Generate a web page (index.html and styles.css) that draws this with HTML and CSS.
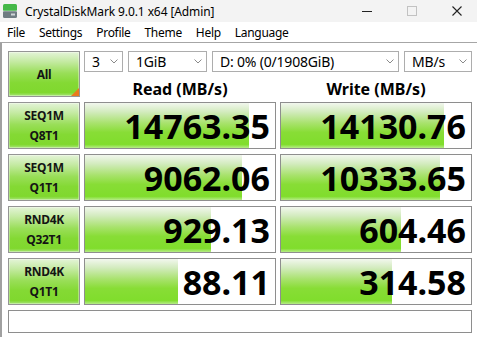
FILE: index.html
```html
<!DOCTYPE html>
<html>
<head>
<meta charset="utf-8">
<link rel="stylesheet" href="styles.css">
</head>
<body>
<div class="window">
  <div class="titlebar">
    <svg class="app-icon" width="14" height="14" viewBox="0 0 14 14">
      <rect x="0" y="0" width="14" height="6.5" rx="1.5" fill="#45b848"/>
      <rect x="0" y="4" width="14" height="2.5" fill="#45b848"/>
      <rect x="0" y="7.5" width="14" height="6.5" rx="1.5" fill="#6f7c82"/>
      <rect x="0" y="7.5" width="14" height="2.5" fill="#6f7c82"/>
      <rect x="8" y="9.5" width="4" height="2" fill="#cfd6d8"/>
    </svg>
    <span class="title">CrystalDiskMark 9.0.1 x64 [Admin]</span>
    <div class="controls">
      <div class="ctl"><svg width="10" height="10" viewBox="0 0 10 10"><line x1="0" y1="5.5" x2="10" y2="5.5" stroke="#222" stroke-width="1"/></svg></div>
      <div class="ctl"><svg width="10" height="10" viewBox="0 0 10 10"><rect x="0.5" y="0.5" width="9" height="9" fill="none" stroke="#c2c2c2" stroke-width="1"/></svg></div>
      <div class="ctl"><svg width="10" height="10" viewBox="0 0 10 10"><path d="M0.5 0.5 L9.5 9.5 M9.5 0.5 L0.5 9.5" stroke="#222" stroke-width="1.1" fill="none"/></svg></div>
    </div>
  </div>
  <div class="menubar">
    <span class="menu-item">File</span>
    <span class="menu-item">Settings</span>
    <span class="menu-item">Profile</span>
    <span class="menu-item">Theme</span>
    <span class="menu-item">Help</span>
    <span class="menu-item">Language</span>
  </div>
  <div class="main">
    <div class="grid">
      <div class="btn all"><span>All</span><span class="corner"></span></div>
      <div class="top-area">
        <div class="selects">
          <div class="select s-count"><span>3</span><svg class="chev" width="8" height="5" viewBox="0 0 8 5"><polyline points="0.5,0.5 4,4 7.5,0.5" fill="none" stroke="#8a8a8a" stroke-width="1"/></svg></div>
          <div class="select s-size"><span>1GiB</span><svg class="chev" width="8" height="5" viewBox="0 0 8 5"><polyline points="0.5,0.5 4,4 7.5,0.5" fill="none" stroke="#8a8a8a" stroke-width="1"/></svg></div>
          <div class="select s-drive"><span>D: 0% (0/1908GiB)</span><svg class="chev" width="8" height="5" viewBox="0 0 8 5"><polyline points="0.5,0.5 4,4 7.5,0.5" fill="none" stroke="#8a8a8a" stroke-width="1"/></svg></div>
          <div class="select s-unit"><span>MB/s</span><svg class="chev" width="8" height="5" viewBox="0 0 8 5"><polyline points="0.5,0.5 4,4 7.5,0.5" fill="none" stroke="#8a8a8a" stroke-width="1"/></svg></div>
        </div>
        <div class="headers">
          <div class="head">Read (MB/s)</div>
          <div class="head">Write (MB/s)</div>
        </div>
      </div>

      <div class="btn test"><span>SEQ1M</span><span>Q8T1</span></div>
      <div class="cell"><div class="bar" style="width:86.1%"></div><div class="num">14763.35</div></div>
      <div class="cell"><div class="bar" style="width:85.8%"></div><div class="num">14130.76</div></div>

      <div class="btn test"><span>SEQ1M</span><span>Q1T1</span></div>
      <div class="cell"><div class="bar" style="width:82.6%"></div><div class="num">9062.06</div></div>
      <div class="cell"><div class="bar" style="width:83.6%"></div><div class="num">10333.65</div></div>

      <div class="btn test"><span>RND4K</span><span>Q32T1</span></div>
      <div class="cell"><div class="bar" style="width:66.1%"></div><div class="num">929.13</div></div>
      <div class="cell"><div class="bar" style="width:63.0%"></div><div class="num">604.46</div></div>

      <div class="btn test"><span>RND4K</span><span>Q1T1</span></div>
      <div class="cell"><div class="bar" style="width:49.1%"></div><div class="num">88.11</div></div>
      <div class="cell"><div class="bar" style="width:58.3%"></div><div class="num">314.58</div></div>
    </div>
    <div class="status"></div>
  </div>
</div>
</body>
</html>
```
FILE: styles.css
```css
* { box-sizing: border-box; }
html, body { margin: 0; padding: 0; }
body {
  width: 477px;
  height: 337px;
  overflow: hidden;
  background: #ffffff;
  font-family: "Noto Sans", "Open Sans", sans-serif;
  color: #000;
}
.window { width: 477px; height: 337px; display: flex; flex-direction: column; }

.titlebar {
  height: 22px;
  background: #f3f3f3;
  display: flex;
  align-items: center;
  padding-left: 3px;
}
.app-icon { flex: none; }
.title { font-size: 12px; margin-left: 8px; letter-spacing: -0.1px; }
.controls { margin-left: auto; margin-right: -2px; display: flex; height: 22px; }
.ctl { width: 45px; display: flex; align-items: center; justify-content: center; }

.menubar {
  height: 21px;
  background: #ffffff;
  display: flex;
  align-items: center;
  padding-left: 0;
  border-bottom: 1px solid #a6a6a6;
}
.menu-item { font-size: 12px; padding: 0 7px; letter-spacing: -0.3px; }

.main {
  flex: 1;
  border-left: 2px solid #a0a0a0;
  padding: 8px 0 0 6px;
  background: #ffffff;
}
.grid {
  display: grid;
  grid-template-columns: 72px 192px 192px;
  grid-template-rows: 46px 47px 47px 47px 47px;
  column-gap: 4px;
  row-gap: 5px;
}

.btn {
  border: 1px solid #959595;
  background: linear-gradient(to bottom, #e4f4d8 0%, #c4eaa2 22%, #99de58 48%, #84d934 70%, #80d82e 92%, #a8e47a 100%);
  display: flex;
  flex-direction: column;
  align-items: center;
  justify-content: center;
  font-weight: 700;
  font-size: 12px;
  color: #141414;
  box-shadow: inset 0 0 0 1px rgba(255,255,255,0.35);
}
.test span { line-height: 20px; letter-spacing: -0.3px; }
.all { position: relative; }
.all span:first-child { letter-spacing: -0.3px; }
.corner {
  position: absolute;
  right: 0;
  bottom: 0;
  width: 0;
  height: 0;
  border-left: 8px solid transparent;
  border-bottom: 8px solid #e97a1c;
}

.top-area { grid-column: 2 / 4; display: flex; flex-direction: column; }
.selects { display: flex; gap: 5px; height: 22px; }
.select {
  border: 1px solid #adadad;
  background: #fff;
  display: flex;
  align-items: center;
  font-size: 14px;
  padding: 0 4px 0 7px;
}
.select span { flex: 1; white-space: nowrap; letter-spacing: -0.2px; }
.chev { flex: none; }
.s-count { width: 39px; }
.s-size { width: 79px; }
.s-drive { width: 187px; }
.s-unit { width: 68px; }
.headers { flex: 1; display: grid; grid-template-columns: 192px 192px; column-gap: 4px; align-items: center; }
.head { text-align: center; font-weight: 700; font-size: 16px; padding-top: 6px; }

.cell {
  border: 1px solid #8e8e8e;
  background: #fff;
  display: grid;
  grid-template: 1fr / 1fr;
  overflow: hidden;
}
.bar {
  grid-area: 1 / 1;
  height: 100%;
  background: linear-gradient(to bottom, #f2f7ee 0%, #d2ebbd 20%, #a8e26c 45%, #88dd36 65%, #80dd2c 92%, #b6ec88 100%);
}
.num {
  grid-area: 1 / 1;
  justify-self: end;
  align-self: center;
  font-weight: 700;
  font-size: 34px;
  line-height: 1;
  padding-right: 5px;
  letter-spacing: 0;
  color: #000;
}

.status {
  margin-top: 5px;
  width: 464px;
  height: 23px;
  border: 1px solid #8e8e8e;
  background: #fff;
}
```
